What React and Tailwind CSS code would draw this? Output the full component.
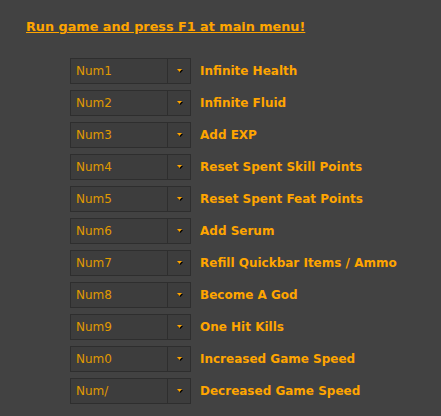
const rows = [
  ['Num1', 'Infinite Health'],
  ['Num2', 'Infinite Fluid'],
  ['Num3', 'Add EXP'],
  ['Num4', 'Reset Spent Skill Points'],
  ['Num5', 'Reset Spent Feat Points'],
  ['Num6', 'Add Serum'],
  ['Num7', 'Refill Quickbar Items / Ammo'],
  ['Num8', 'Become A God'],
  ['Num9', 'One Hit Kills'],
  ['Num0', 'Increased Game Speed'],
  ['Num/', 'Decreased Game Speed'],
];

function KeySelect({ value }) {
  return (
    <div className="flex h-[26px] w-[121px] border border-[#2e2e2e] bg-[#3d3d3d]">
      <div className="flex flex-1 items-center pl-[5px] text-[12px] text-[#e09a00]">{value}</div>
      <div className="relative w-[23px] border-l border-[#2e2e2e]">
        <svg width="6" height="5" viewBox="0 0 6 5" className="absolute left-[9px] top-[10px]">
          <path d="M1 1h5L3.5 4z" fill="#000" />
          <path d="M0 0h5L2.5 3z" fill="#ffa500" />
        </svg>
      </div>
    </div>
  );
}

export default function App() {
  return (
    <div className="h-[416px] w-[441px] bg-[#424242] font-['DejaVu_Sans',sans-serif]">
      <div className="pl-[26px] pt-[14px]">
        <span className="text-[12.8px] font-bold text-[#ffa500] underline">Run game and press F1 at main menu!</span>
      </div>
      <div className="flex flex-col gap-[6px] pl-[70px] pt-[20px]">
        {rows.map(([k, label]) => (
          <div key={k} className="flex items-center">
            <KeySelect value={k} />
            <span className="ml-[9px] text-[12px] font-bold text-[#ffa500]">{label}</span>
          </div>
        ))}
      </div>
    </div>
  );
}
